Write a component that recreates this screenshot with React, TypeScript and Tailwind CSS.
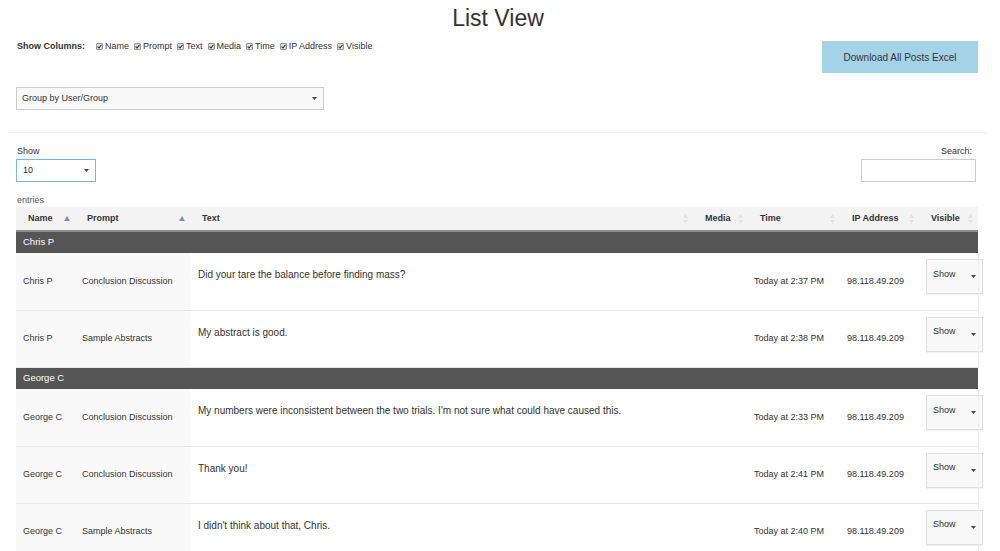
import React from 'react';

interface Post {
  name: string;
  prompt: string;
  text: string;
  time: string;
  ip: string;
}

interface Group {
  label: string;
  posts: Post[];
}

const groups: Group[] = [
  {
    label: 'Chris P',
    posts: [
      { name: 'Chris P', prompt: 'Conclusion Discussion', text: 'Did your tare the balance before finding mass?', time: 'Today at 2:37 PM', ip: '98.118.49.209' },
      { name: 'Chris P', prompt: 'Sample Abstracts', text: 'My abstract is good.', time: 'Today at 2:38 PM', ip: '98.118.49.209' },
    ],
  },
  {
    label: 'George C',
    posts: [
      { name: 'George C', prompt: 'Conclusion Discussion', text: "My numbers were inconsistent between the two trials. I'm not sure what could have caused this.", time: 'Today at 2:33 PM', ip: '98.118.49.209' },
      { name: 'George C', prompt: 'Conclusion Discussion', text: 'Thank you!', time: 'Today at 2:41 PM', ip: '98.118.49.209' },
      { name: 'George C', prompt: 'Sample Abstracts', text: "I didn't think about that, Chris.", time: 'Today at 2:40 PM', ip: '98.118.49.209' },
    ],
  },
];

const columns = ['Name', 'Prompt', 'Text', 'Media', 'Time', 'IP Address', 'Visible'];

const Caret = () => (
  <svg width="5" height="3" viewBox="0 0 5 3" className="shrink-0">
    <path d="M0 0h5L2.5 3z" fill="#444" />
  </svg>
);

const SortIcon = ({ active }: { active: boolean }) =>
  active ? (
    <svg width="6" height="5" viewBox="0 0 6 5">
      <path d="M3 0L6 5H0z" fill="#8585d8" />
    </svg>
  ) : (
    <svg width="5" height="10" viewBox="0 0 5 10">
      <path d="M2.5 0L5 4H0z" fill="#e2e2e2" />
      <path d="M0 6h5L2.5 10z" fill="#e2e2e2" />
    </svg>
  );

const Check = ({ label }: { label: string }) => (
  <span className="flex items-center mr-[5px]">
    <span className="w-[7px] h-[7px] mr-[2px] border border-[#999] bg-[#ddd] rounded-[1px] flex items-center justify-center">
      <svg width="5" height="5" viewBox="0 0 5 5">
        <path d="M0.6 2.6L2 4L4.5 0.8" stroke="#333" strokeWidth="1.1" fill="none" />
      </svg>
    </span>
    {label}
  </span>
);

export default function App() {
  return (
    <div className="w-[1000px] h-[551px] overflow-hidden bg-white text-[#333] font-['Liberation_Sans',Arial,sans-serif] pl-[8px] pr-[12px]">
      <div className="h-[31px] pt-[5px] text-center text-[23px] leading-[26px]">List View</div>

      <div className="flex justify-between items-start pl-[9px] pr-[10px]">
        <div>
          <div className="mt-[9px] flex items-center text-[9px] leading-[12px]">
            <span className="font-bold mr-[11px]">Show Columns:</span>
            {columns.map((c) => (
              <Check key={c} label={c} />
            ))}
          </div>
          <div className="mt-[35px] ml-[-1px] w-[308px] h-[23px] border border-[#ccc] bg-[#f9f9f9] flex items-center justify-between pl-[5px] pr-[6px] text-[9px]">
            <span>Group by User/Group</span>
            <Caret />
          </div>
        </div>
        <div className="mt-[10px] w-[156px] h-[32px] bg-[#a4d3e8] flex items-center justify-center text-[10px]">
          Download All Posts Excel
        </div>
      </div>

      <div className="mt-[22px] h-px bg-[#eee]" />

      <div className="pl-[8px] pr-[10px]">
        <div className="flex justify-between">
          <div>
            <div className="mt-[12px] pl-[1px] text-[9px] leading-[12px]">Show</div>
            <div className="mt-[2px] w-[80px] h-[23px] border border-[#7ab4ea] flex items-center justify-between pl-[6px] pr-[6px] text-[9px]">
              <span>10</span>
              <Caret />
            </div>
          </div>
          <div className="flex flex-col items-end">
            <div className="mt-[12px] pr-[6px] text-[9px] leading-[12px]">Search:</div>
            <div className="mt-[2px] mr-[2px] w-[115px] h-[23px] border border-[#ccc]" />
          </div>
        </div>
        <div className="mt-[12px] pl-[1px] text-[9px] leading-[12px] text-[#555]">entries</div>

        <table className="mt-px w-[962px] table-fixed border-collapse text-[9px]">
          <colgroup>
            <col className="w-[59px]" />
            <col className="w-[115px]" />
            <col className="w-[503px]" />
            <col className="w-[55px]" />
            <col className="w-[92px]" />
            <col className="w-[79px]" />
            <col className="w-[59px]" />
          </colgroup>
          <thead>
            <tr className="h-[24px] bg-[#f3f3f3] border-b-2 border-[#8c8c8c]">
              {columns.map((c, i) => (
                <th key={c} className="p-0 font-bold text-left">
                  <div className="flex items-center justify-between pl-[12px] pr-[5px]">
                    <span>{c}</span>
                    <SortIcon active={i < 2} />
                  </div>
                </th>
              ))}
            </tr>
          </thead>
          <tbody>
            {groups.map((g) => (
              <React.Fragment key={g.label}>
                <tr className="h-[22px] bg-[#555]">
                  <td colSpan={7} className="pl-[7px] text-white text-[9.5px]">
                    {g.label}
                  </td>
                </tr>
                {g.posts.map((p, i) => (
                  <tr key={i} className="h-[57px] border-b border-[#e6e6e6]">
                    <td className="bg-[#f9f9f9] pl-[7px]">{p.name}</td>
                    <td className="bg-[#f9f9f9] pl-[7px]">{p.prompt}</td>
                    <td className="align-top pt-[15px] pl-[8px] text-[10px] leading-[13px] whitespace-nowrap">{p.text}</td>
                    <td />
                    <td className="pl-[6px] whitespace-nowrap">{p.time}</td>
                    <td className="pl-[7px]">{p.ip}</td>
                    <td className="align-top pt-[6px] pl-[7px] border-r border-[#eee] overflow-visible">
                      <div className="w-[57px] h-[35px] border border-[#ddd] bg-[#f9f9f9] shadow-[0_1px_1px_rgba(0,0,0,0.05)] flex items-center justify-between pl-[6px] pr-[6px]">
                        <span className="mt-[-4px]">Show</span>
                        <Caret />
                      </div>
                    </td>
                  </tr>
                ))}
              </React.Fragment>
            ))}
          </tbody>
        </table>
      </div>
    </div>
  );
}
